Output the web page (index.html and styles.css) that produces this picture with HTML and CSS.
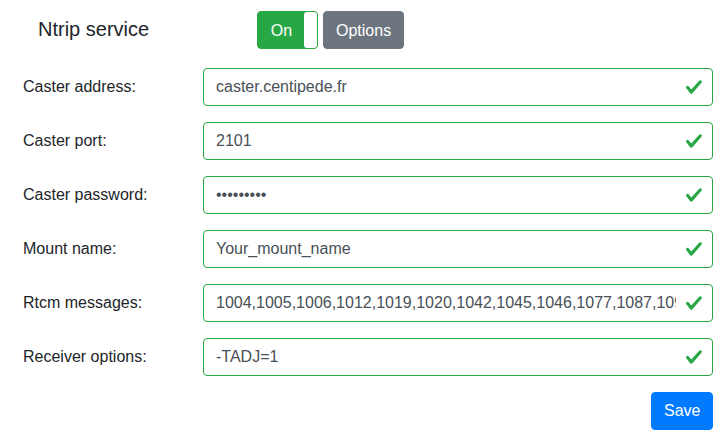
FILE: index.html
```html
<!DOCTYPE html>
<html lang="en">
<head>
<meta charset="utf-8">
<title>Ntrip service</title>
<link rel="stylesheet" href="styles.css">
</head>
<body>
<div class="page">
  <div class="header">
    <h5 class="title">Ntrip service</h5>
    <div class="toggle">
      <span class="toggle-on">On</span>
      <span class="toggle-handle"></span>
    </div>
    <button class="btn btn-secondary" type="button">Options</button>
  </div>
  <form class="form">
    <label class="label" for="f1">Caster address:</label>
    <div class="field">
      <input id="f1" class="control" type="text" value="caster.centipede.fr">
      <svg class="valid" viewBox="0 0 8 8"><path d="M2.3 6.73L.6 4.53c-.4-1.04.46-1.4 1.1-.8l1.1 1.4 3.4-3.8c.6-.63 1.6-.27 1.2.7l-4 4.6c-.43.5-.8.4-1.1.1z"/></svg>
    </div>
    <label class="label" for="f2">Caster port:</label>
    <div class="field">
      <input id="f2" class="control" type="text" value="2101">
      <svg class="valid" viewBox="0 0 8 8"><path d="M2.3 6.73L.6 4.53c-.4-1.04.46-1.4 1.1-.8l1.1 1.4 3.4-3.8c.6-.63 1.6-.27 1.2.7l-4 4.6c-.43.5-.8.4-1.1.1z"/></svg>
    </div>
    <label class="label" for="f3">Caster password:</label>
    <div class="field">
      <input id="f3" class="control" type="password" value="centipede">
      <svg class="valid" viewBox="0 0 8 8"><path d="M2.3 6.73L.6 4.53c-.4-1.04.46-1.4 1.1-.8l1.1 1.4 3.4-3.8c.6-.63 1.6-.27 1.2.7l-4 4.6c-.43.5-.8.4-1.1.1z"/></svg>
    </div>
    <label class="label" for="f4">Mount name:</label>
    <div class="field">
      <input id="f4" class="control" type="text" value="Your_mount_name">
      <svg class="valid" viewBox="0 0 8 8"><path d="M2.3 6.73L.6 4.53c-.4-1.04.46-1.4 1.1-.8l1.1 1.4 3.4-3.8c.6-.63 1.6-.27 1.2.7l-4 4.6c-.43.5-.8.4-1.1.1z"/></svg>
    </div>
    <label class="label" for="f5">Rtcm messages:</label>
    <div class="field">
      <input id="f5" class="control" type="text" value="1004,1005,1006,1012,1019,1020,1042,1045,1046,1077,1087,1097,1107,1127,1230">
      <svg class="valid" viewBox="0 0 8 8"><path d="M2.3 6.73L.6 4.53c-.4-1.04.46-1.4 1.1-.8l1.1 1.4 3.4-3.8c.6-.63 1.6-.27 1.2.7l-4 4.6c-.43.5-.8.4-1.1.1z"/></svg>
    </div>
    <label class="label" for="f6">Receiver options:</label>
    <div class="field">
      <input id="f6" class="control" type="text" value="-TADJ=1">
      <svg class="valid" viewBox="0 0 8 8"><path d="M2.3 6.73L.6 4.53c-.4-1.04.46-1.4 1.1-.8l1.1 1.4 3.4-3.8c.6-.63 1.6-.27 1.2.7l-4 4.6c-.43.5-.8.4-1.1.1z"/></svg>
    </div>
    <div class="actions">
      <button class="btn btn-primary" type="button">Save</button>
    </div>
  </form>
</div>
</body>
</html>
```
FILE: styles.css
```css
* { box-sizing: border-box; }
html, body {
  margin: 0;
  background: #fff;
  font-family: "Liberation Sans", Arial, sans-serif;
  font-size: 16px;
  line-height: 1.5;
  color: #212529;
}
.page {
  padding: 11px 14px 0 23px;
}
.header {
  display: flex;
  align-items: center;
  height: 38px;
}
.title {
  margin: 0;
  width: 234px;
  padding-left: 15px;
  font-size: 20px;
  font-weight: 500;
  line-height: 1.2;
  color: #212529;
  position: relative;
  top: -1px;
}
.toggle {
  width: 61px;
  height: 38px;
  background: #28a745;
  border: 1px solid #28a745;
  border-radius: 4px;
  display: flex;
  align-items: stretch;
  margin-right: 5px;
}
.toggle-on {
  flex: 1;
  display: flex;
  align-items: center;
  justify-content: center;
  color: #fff;
  padding-left: 1px;
  padding-top: 2px;
}
.toggle-handle {
  width: 13px;
  background: #fff;
  border-radius: 3px;
}
.btn {
  font-family: "Liberation Sans", Arial, sans-serif;
  font-size: 16px;
  line-height: 1.5;
  height: 38px;
  padding: 6px 12px;
  border: 1px solid transparent;
  border-radius: 4px;
  color: #fff;
  cursor: pointer;
}
.btn-secondary {
  background: #6c757d;
  border-color: #6c757d;
  width: 81px;
  padding-top: 7px;
  padding-bottom: 5px;
}
.btn-primary {
  background: #007bff;
  border-color: #007bff;
  width: 62px;
}
.form {
  margin-top: 19px;
  display: grid;
  grid-template-columns: 180px 1fr;
  row-gap: 16px;
}
.label {
  display: flex;
  align-items: center;
  height: 38px;
  color: #212529;
}
.field {
  position: relative;
  height: 38px;
}
.control {
  display: block;
  width: 100%;
  height: 38px;
  margin: 0;
  padding: 6px 36px 6px 12px;
  font-family: "Liberation Sans", Arial, sans-serif;
  font-size: 16px;
  line-height: 1.5;
  color: #495057;
  background: #fff;
  border: 1px solid #28a745;
  border-radius: 4px;
  outline: none;
}
.valid {
  position: absolute;
  right: 10px;
  top: 10px;
  width: 18px;
  height: 18px;
  fill: #28a745;
}
.actions {
  grid-column: 1 / -1;
  display: flex;
  justify-content: flex-end;
}
```
